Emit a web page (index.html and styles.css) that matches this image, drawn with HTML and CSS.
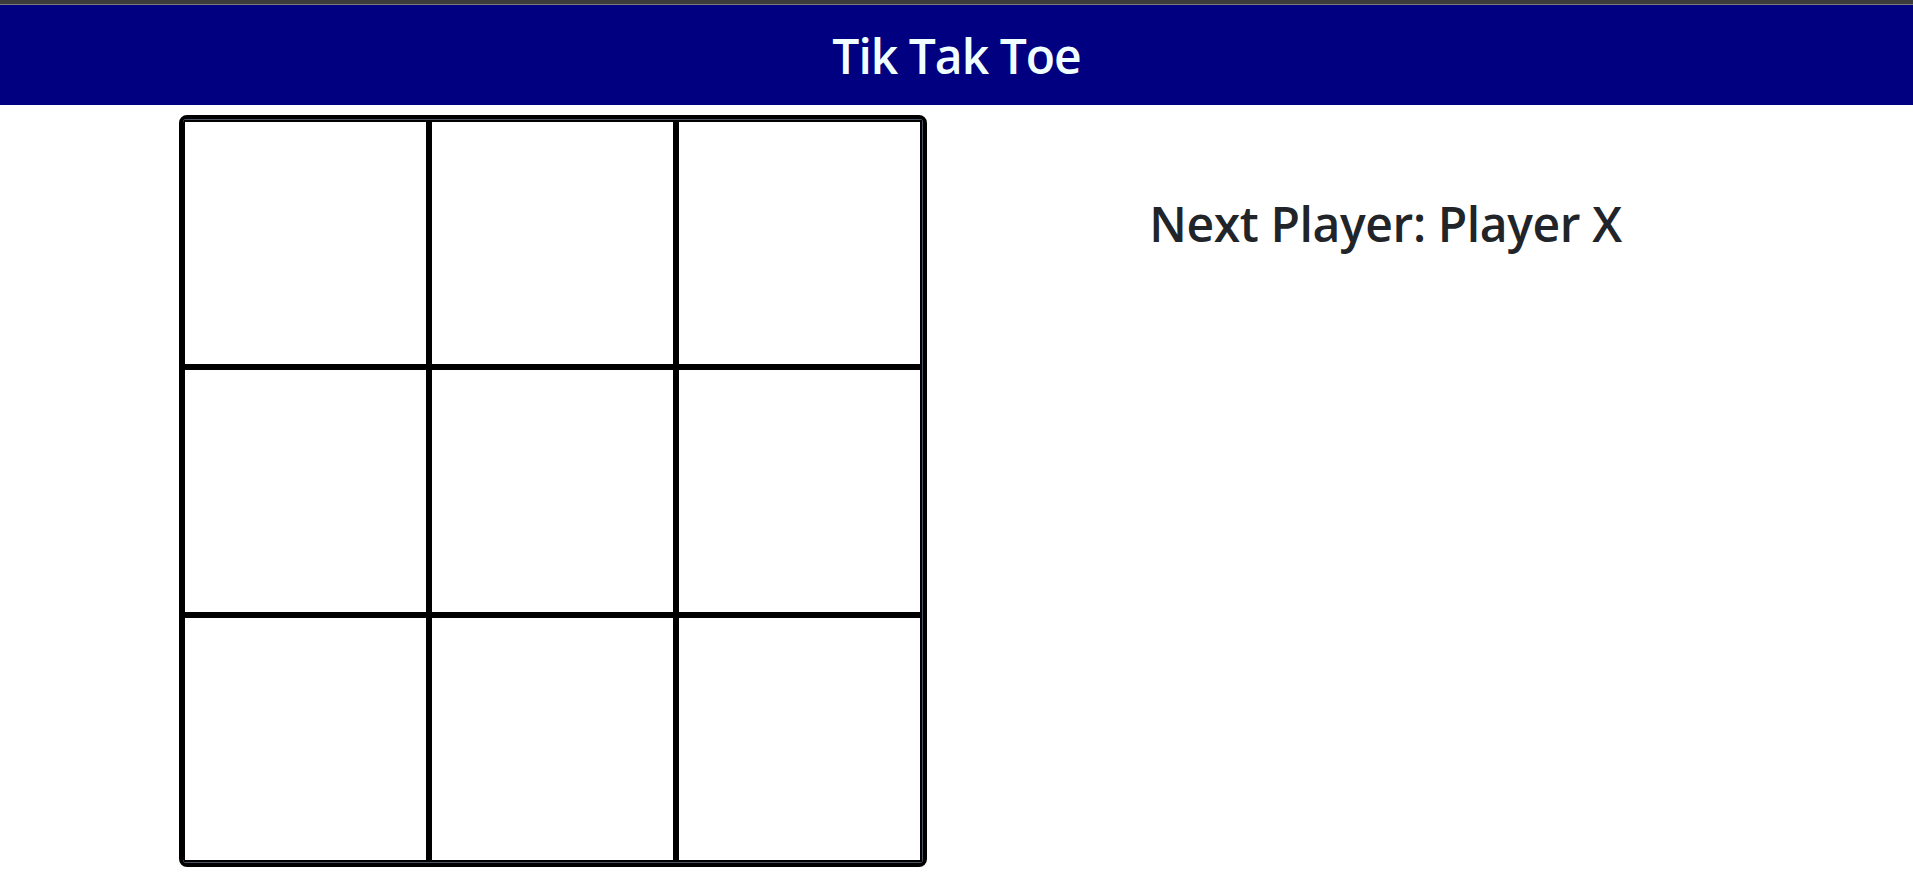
FILE: index.html
```html
<!DOCTYPE html>
<html lang="en">
<head>
<meta charset="utf-8">
<title>Tik Tak Toe</title>
<link rel="stylesheet" href="styles.css">
</head>
<body>
<div class="topbar"></div>
<header class="header">
  <h1 class="title">Tik Tak Toe</h1>
</header>
<main class="main">
  <div class="board">
    <div class="grid">
      <div class="cell"></div>
      <div class="cell"></div>
      <div class="cell"></div>
      <div class="cell"></div>
      <div class="cell"></div>
      <div class="cell"></div>
      <div class="cell"></div>
      <div class="cell"></div>
      <div class="cell"></div>
    </div>
  </div>
  <section class="status">
    <h2 class="status-text">Next Player: Player X</h2>
  </section>
</main>
</body>
</html>
```

FILE: styles.css
```css
* { box-sizing: border-box; }
html, body {
  margin: 0;
  padding: 0;
  background: #fff;
  font-family: "Open Sans", "Noto Sans", sans-serif;
  color: #212529;
}
.topbar {
  height: 5px;
  background: #3c3c3c;
  border-bottom: 1px solid #7a7a7a;
}
.header {
  height: 100px;
  background: #000080;
  display: flex;
  align-items: center;
  justify-content: center;
}
.title {
  margin: 0;
  font-size: 48px;
  font-weight: 600;
  font-stretch: 92%;
  letter-spacing: -1px;
  line-height: 1.2;
  color: #f0ffff;
  padding-top: 2px;
}
.main {
  display: flex;
  align-items: flex-start;
  padding-left: 179px;
  padding-top: 10px;
}
.board {
  border: 4px solid #000;
  border-radius: 8px;
  overflow: hidden;
  background: #000;
}
.grid {
  display: grid;
  grid-template-columns: repeat(3, 241px);
  grid-template-rows: repeat(3, 242px);
  gap: 6px;
  padding: 2px;
  background: #000;
  border-top: 1px solid #4b5563;
  border-right: 1px solid #4b5563;
  border-bottom: 1px solid #4b5563;
}
.cell {
  background: #fff;
}
.status {
  flex: 1;
  padding-right: 69px;
  text-align: center;
}
.status-text {
  margin: 80px 0 0;
  font-size: 48px;
  font-weight: 600;
  font-stretch: 92%;
  letter-spacing: -0.4px;
  line-height: 1.2;
  color: #212529;
}
```
